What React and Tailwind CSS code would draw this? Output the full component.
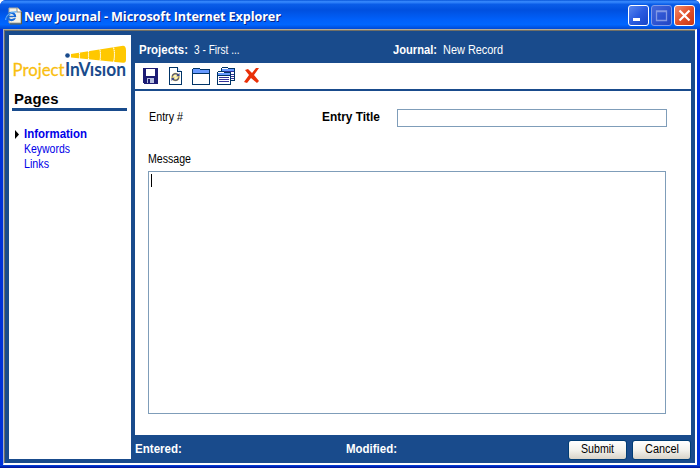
import React from "react";

function PageIcon() {
  return (
    <svg width="18" height="18" viewBox="0 0 18 18" className="shrink-0">
      <path d="M4 1h9l3 3v12H4z" fill="#f4f2e8" stroke="#aaa89a" />
      <path d="M12 1v4h4" fill="#fff" stroke="#8d8c83" />
      <path d="M16.500 5v12H5" fill="none" stroke="#66603f" />
      <circle cx="6.500" cy="9.500" r="3.600" fill="none" stroke="#1769d8" strokeWidth="2.200" />
      <path d="M3.500 9.500h7" stroke="#1769d8" strokeWidth="1.600" />
      <path d="M8 10.700h3" stroke="#f4f2e8" strokeWidth="1" />
      <path d="M.8 13C0 9 6 4 12 5" fill="none" stroke="#5ba9f5" strokeWidth="1.200" />
    </svg>
  );
}

function CaptionButton({ kind }) {
  const look = {
    min: "border-white bg-linear-to-br from-[#5a86ee] via-[#2a5be0] to-[#1744c8]",
    max: "border-[#809be8] bg-linear-to-br from-[#4468dc] via-[#2f55d2] to-[#2145c4]",
    close: "border-white bg-linear-to-br from-[#f08a69] via-[#e2512b] to-[#c8350f]",
  }[kind];
  return (
    <div className={"h-[21px] w-[21px] rounded-[3px] border " + look}>
      <svg width="19" height="19" viewBox="0 0 19 19">
        {kind === "min" && <path d="M4 12h7v3H4z" fill="#fff" />}
        {kind === "max" && <path d="M4.500 5v9.500h10V5zM4 5.500h11" fill="none" stroke="#8399e5" strokeWidth="1.300" />}
        {kind === "close" && <path d="M4.500 4.500l10 10M14.500 4.500l-10 10" stroke="#fff" strokeWidth="2.200" />}
      </svg>
    </div>
  );
}

function Logo() {
  return (
    <svg width="118" height="38" viewBox="12 44 118 38" className="block overflow-visible">
      <path d="M71 54L123 45.800q3 0 3 5v9q0 3.500-3 3L71 57.500z" fill="#ffc800" />
      <path d="M79.500 51v9M88.500 49v12M99.500 48q2 7 0 15M113 46q3 8 0 18" stroke="#fff" strokeWidth="1.100" strokeDasharray="1.500 .6" fill="none" />
      <circle cx="67.500" cy="55.500" r="2.300" fill="#194b8c" />
      <g fontFamily="Lato, sans-serif" fontSize="18">
        <text x="12.500" y="76" textLength="52" lengthAdjust="spacingAndGlyphs" fill="#f9be10" stroke="#f9be10" strokeWidth=".3">Project</text>
        <text x="65" y="76" fontWeight="700" textLength="61" lengthAdjust="spacingAndGlyphs" fill="#194b8c">InVısıon</text>
      </g>
    </svg>
  );
}

function ToolbarIcons() {
  return (
    <svg width="120" height="26" viewBox="140 63 120 26" shapeRendering="crispEdges" className="block">
      <path d="M143 68h15v15.500h-14l-1-1z" fill="#1c1c74" />
      <path d="M146 69h9v7h-9z" fill="#fff" />
      <path d="M147 78h7v5h-7z" fill="#b8c0e0" />
      <path d="M148 79h2v4h-2z" fill="#1c1c74" />
      <path d="M169.500 67.500h8l4 4v13h-12z" fill="#fff" stroke="#003366" />
      <path d="M177.500 67.500v4h4" fill="#cde0fa" stroke="#003366" />
      <g shapeRendering="auto">
        <circle cx="175.500" cy="77" r="3.300" fill="#fff5b8" stroke="#e9cd5a" strokeWidth="2" />
        <path d="M172.300 76.500a3.300 3.300 0 0 1 5.800-1.600M178.700 77.500a3.300 3.300 0 0 1-5.800 1.600" fill="none" stroke="#38458c" strokeWidth="1.100" />
        <path d="M179.500 73v3.300h-3.300zM171.500 81v-3.300h3.300z" fill="#38458c" />
      </g>
      <path d="M192.500 71.500v-2l1-1h6l1 1h9v15h-17z" fill="#fff" stroke="#003366" />
      <path d="M193 69h7v1h9v3h-16z" fill="#6699ff" />
      <path d="M192 73h18v1h-18z" fill="#003366" />
      <path d="M221.500 80.500v-12l1-1h5l1 1h6v12z" fill="#fff" stroke="#003366" />
      <path d="M222 69h12v2h-12z" fill="#6699ff" />
      <path d="M222 71h12v1h-12zM231 74h3v1h-3zM231 76h3v1h-3zM231 78h3v1h-3z" fill="#333399" />
      <path d="M217.500 84.500v-12l1-1h5l1 1h6v12z" fill="#fff" stroke="#003366" />
      <path d="M218 73h12v2h-12z" fill="#6699ff" />
      <path d="M217 75h14v1h-14z" fill="#003366" />
      <path d="M219 77h10v1h-10zM219 79h10v1h-10zM219 81h10v1h-10z" fill="#333399" />
      <path d="M245 70l3-1 4 4 4-5h3l-5 7 5 6-2 2-6-5-4 5-3-1 5-7z" fill="#e93008" shapeRendering="auto" />
    </svg>
  );
}

/* The outer width is the advance of the condensed text inside it. */
function Label({ className, children }) {
  return (
    <span className={"block h-[15px] shrink-0 text-[12px] leading-[15px] whitespace-nowrap " + className}>
      {children}
    </span>
  );
}

function XpButton({ children }) {
  return (
    <button className="flex h-[20px] w-[59px] items-center justify-center rounded-[3px] border border-[#003c74] bg-linear-to-b from-white via-[#f3f2ed] to-[#d8d3c8] text-black">
      {children}
    </button>
  );
}

export default function App() {
  return (
    <div className="flex h-[468px] w-[700px] flex-col overflow-hidden rounded-t-[6px] bg-[#0031d9] font-['Liberation_Sans',Arial,sans-serif] text-black">
      <header className="flex h-[29px] shrink-0 items-center justify-between bg-[linear-gradient(to_bottom,#0755d9_0%,#3a8cff_6%,#0a5de8_15%,#0050df_35%,#0060fa_68%,#0066ff_85%,#0048d3_100%)] pt-[2px] pr-[5px] pl-[5px]">
        <div className="flex items-center gap-[1px]">
          <PageIcon />
          <h1 className="origin-left scale-x-[0.973] font-['Open_Sans',sans-serif] text-[13px] leading-[18px] font-bold tracking-[-0.1px] whitespace-nowrap text-white [text-shadow:1px_1px_0_#07258b]">
            New Journal - Microsoft Internet Explorer
          </h1>
        </div>
        <div className="flex gap-[2px]">
          <CaptionButton kind="min" />
          <CaptionButton kind="max" />
          <CaptionButton kind="close" />
        </div>
      </header>
      <div className="mr-[3px] ml-[3px] flex h-[436px] shrink-0 border-t border-r-2 border-b-2 border-l border-t-[#b0ab9e] border-r-white border-b-white border-l-[#9cb0d8]">
        <div className="flex min-w-0 flex-1 border-t border-l border-[#716f64] bg-[#194b8c] pt-[4px] pl-[4px]">
          <aside className="h-[424px] w-[122px] shrink-0 bg-white pt-[9px] pl-[3px]">
            <Logo />
            <div className="mt-[9px] h-[20px] w-[115px] border-b-[3px] border-[#194b8c] pl-[2px]">
              <h2 className="origin-left scale-x-[1.06] text-[14px] leading-[17px] font-bold tracking-[0.2px]">Pages</h2>
            </div>
            <nav className="mt-[16px] flex flex-col text-[#0000e8]">
              <div className="flex h-[15px] items-center">
                <svg width="12" height="9" className="block"><path d="M3 0l4 4.500L3 9z" fill="#000" /></svg>
                <Label className="w-[63px] origin-left scale-x-[0.955] font-bold">Information</Label>
              </div>
              <div className="pl-[12px]"><Label className="w-[46px] origin-left scale-x-[0.873]">Keywords</Label></div>
              <div className="pl-[12px]"><Label className="w-[25px] origin-left scale-x-[0.893]">Links</Label></div>
            </nav>
          </aside>
          <main className="-mt-[4px] ml-[4px] flex w-[556px] flex-col text-white">
            <div className="flex h-[32px] shrink-0 items-center pt-[7px] pl-[4px]">
              <Label className="w-[49px] origin-left scale-x-[0.955] font-bold">Projects:</Label>
              <Label className="ml-[6px] w-[45px] origin-left scale-x-[0.845]">3 - First ...</Label>
              <Label className="ml-[154px] w-[44px] origin-left scale-x-[0.93] font-bold">Journal:</Label>
              <Label className="ml-[6px] w-[60px] origin-left scale-x-[0.91]">New Record</Label>
            </div>
            <div className="h-[26px] shrink-0 bg-white pl-[5px]"><ToolbarIcons /></div>
            <section className="mt-[2px] h-[344px] shrink-0 bg-white pl-[13px] text-black">
              <div className="flex h-[61px] items-start pt-[18px]">
                <Label className="mt-px ml-px w-[34px] origin-left scale-x-[0.895]">Entry #</Label>
                <Label className="mt-px ml-[139px] w-[58px] origin-left scale-x-[0.99] font-bold">Entry Title</Label>
                <input aria-label="Entry Title" className="ml-[17px] h-[18px] w-[270px] border border-[#7f9db9] bg-white outline-none" />
              </div>
              <div className="h-[19px]"><Label className="w-[43px] origin-left scale-x-[0.883]">Message</Label></div>
              <div className="h-[243px] w-[518px] border border-[#7f9db9] pt-[2px] pl-[2px]">
                <div className="h-[13px] w-px bg-black" />
              </div>
            </section>
            <footer className="flex h-[28px] shrink-0 items-center pt-px">
              <Label className="w-[47px] origin-left scale-x-[0.965] font-bold">Entered:</Label>
              <Label className="ml-[164px] w-[51px] origin-left scale-x-[0.957] font-bold">Modified:</Label>
              <div className="ml-auto flex gap-[5px]">
                <XpButton><Label className="w-[33px] origin-left scale-x-[0.885]">Submit</Label></XpButton>
                <XpButton><Label className="w-[34px] origin-left scale-x-[0.91]">Cancel</Label></XpButton>
              </div>
            </footer>
          </main>
        </div>
      </div>
      <div className="h-[3px] bg-[linear-gradient(to_bottom,#0747df,#0026b5,#001398)]" />
    </div>
  );
}
